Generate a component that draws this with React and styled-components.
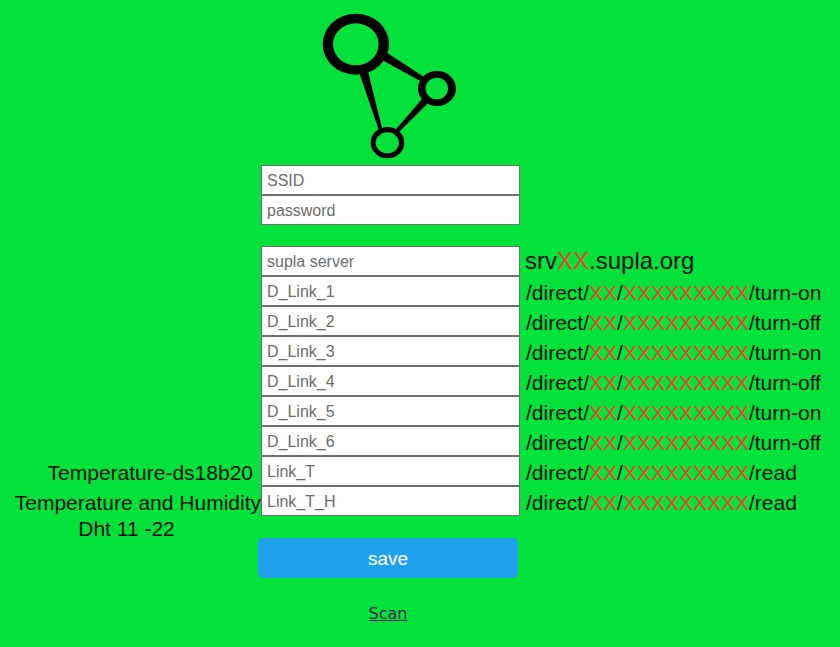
import React from "react";
import styled, { createGlobalStyle } from "styled-components";

const GlobalStyle = createGlobalStyle`
  *, *::before, *::after {
    box-sizing: border-box;
  }
  body {
    margin: 0;
    background: #02e23a;
    color: #04100a;
    font-family: "Liberation Sans", Arial, sans-serif;
  }
`;

const Form = styled.form`
  display: flex;
  flex-direction: column;
`;

const Row = styled.div`
  display: grid;
  grid-template-columns: minmax(0, 1fr) 259px 320px;
  align-items: center;
`;

const Brand = styled.header`
  display: grid;
  grid-template-columns: minmax(0, 1fr) 260px 320px;
  padding: 12px 0 5px;
`;

const Logo = styled.svg`
  grid-column: 2;
  justify-self: center;
  width: 138px;
  height: 148px;
  fill: #000;
`;

const FieldGroup = styled.div`
  display: flex;
  flex-direction: column;
  margin-bottom: ${({ $spaced }) => ($spaced ? "21px" : "0")};
`;

const TextField = styled.input`
  grid-column: 2;
  width: 100%;
  height: 30px;
  padding: 2px 5px 0;
  border: 1px solid #707070;
  border-radius: 0;
  background: #fff;
  color: #222;
  font: 16px "Liberation Sans", Arial, sans-serif;

  &::placeholder {
    color: #6c6c6c;
    opacity: 1;
  }
`;

const FieldLabel = styled.label`
  grid-column: 1;
  justify-self: end;
  padding-top: 4px;
  padding-right: ${({ $flush }) => ($flush ? "0" : "8px")};
  font-size: 21px;
  line-height: 26px;
  white-space: nowrap;
`;

const LabelNote = styled.div`
  grid-column: 1;
  height: 22px;
  padding-right: 8px;
  font-size: 21px;
  line-height: 26px;
  text-align: center;
`;

const Hint = styled.div`
  grid-column: 3;
  padding-top: ${({ $large }) => ($large ? "0" : "4px")};
  padding-left: ${({ $large }) => ($large ? "5px" : "6px")};
  font-size: ${({ $large }) => ($large ? "24px" : "21px")};
  line-height: 26px;
  white-space: nowrap;
`;

const Blank = styled.span`
  color: #e8472f;
`;

const Actions = styled.div`
  display: grid;
  grid-template-columns: minmax(0, 1fr) 260px 322px;
  row-gap: 24px;
  justify-items: center;
`;

const SaveButton = styled.button`
  grid-column: 2;
  width: 100%;
  height: 40px;
  padding: 2px 0 0;
  border: 0;
  border-radius: 5px;
  background: #20a1ee;
  color: #fff;
  font: 19px "Liberation Sans", Arial, sans-serif;
  cursor: pointer;
`;

const ScanLink = styled.a`
  grid-column: 2;
  color: #40205f;
  font: 16px/24px "DejaVu Sans", Verdana, sans-serif;
`;

const accessFields = [
  { id: "ssid", placeholder: "SSID" },
  { id: "password", placeholder: "password", type: "password" },
];

const linkFields = [
  { id: "server", placeholder: "supla server", hint: ["srv", "XX", ".supla.org"], large: true },
  ...[1, 2, 3, 4, 5, 6].map((n) => ({
    id: `dlink${n}`,
    placeholder: `D_Link_${n}`,
    hint: ["/direct/", "XX", "/", "XXXXXXXXX", n % 2 ? "/turn-on" : "/turn-off"],
  })),
  {
    id: "linkt",
    placeholder: "Link_T",
    label: "Temperature-ds18b20",
    hint: ["/direct/", "XX", "/", "XXXXXXXXX", "/read"],
  },
  {
    id: "linkth",
    placeholder: "Link_T_H",
    label: "Temperature and Humidity",
    flush: true,
    hint: ["/direct/", "XX", "/", "XXXXXXXXX", "/read"],
  },
];

function Field({ id, placeholder, type = "text", label, flush, hint, large }) {
  return (
    <Row>
      {label && (
        <FieldLabel htmlFor={id} $flush={flush}>
          {label}
        </FieldLabel>
      )}
      <TextField
        id={id}
        name={id}
        type={type}
        placeholder={placeholder}
        aria-label={label ? undefined : placeholder}
        aria-describedby={hint ? `${id}-hint` : undefined}
      />
      {hint && (
        <Hint id={`${id}-hint`} $large={large}>
          {hint.map((part, i) => (/^X+$/.test(part) ? <Blank key={i}>{part}</Blank> : part))}
        </Hint>
      )}
    </Row>
  );
}

function SuplaLogo() {
  return (
    <Logo viewBox="33 36 414 444" role="img" aria-label="Supla">
      <path d="M232 159 342 231 332 244 216 180ZM147 216 173 210 217 388 207 392ZM338 295 355 308 267 396 256 390Z" />
      <g fillRule="evenodd">
        <path d="M38 132.500a99.500 91.500 0 1 0 199 0a99.500 91.500 0 1 0-199 0ZM69 133a68.500 63 0 1 0 137 0a68.500 63 0 1 0-137 0Z" />
        <path d="M324 265.500a57 52.500 0 1 0 114 0a57 52.500 0 1 0-114 0ZM347 265.500a33.500 32.500 0 1 0 67 0a33.500 32.500 0 1 0-67 0Z" />
        <path d="M182 428a50.500 47 0 1 0 101 0a50.500 47 0 1 0-101 0ZM197 428.500a35 31.500 0 1 0 70 0a35 31.500 0 1 0-70 0Z" />
      </g>
    </Logo>
  );
}

export default function App() {
  return (
    <>
      <GlobalStyle />
      <Form onSubmit={(event) => event.preventDefault()}>
        <Brand>
          <SuplaLogo />
        </Brand>
        <FieldGroup $spaced>
          {accessFields.map((field) => (
            <Field key={field.id} {...field} />
          ))}
        </FieldGroup>
        <FieldGroup>
          {linkFields.map((field) => (
            <Field key={field.id} {...field} />
          ))}
          <Row>
            <LabelNote>Dht 11 -22</LabelNote>
          </Row>
        </FieldGroup>
        <Actions>
          <SaveButton type="submit">save</SaveButton>
          <ScanLink href="#scan">Scan</ScanLink>
        </Actions>
      </Form>
    </>
  );
}
